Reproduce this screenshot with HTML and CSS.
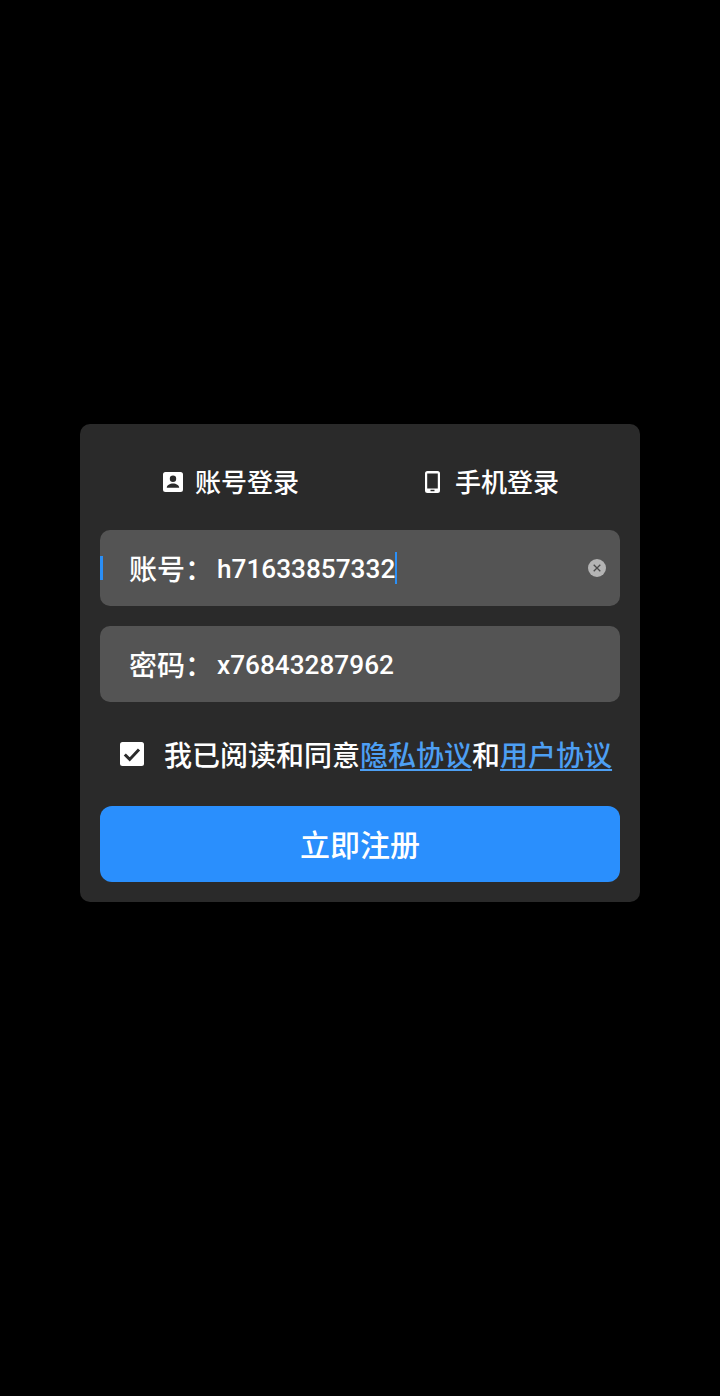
FILE: index.html
```html
<!DOCTYPE html>
<html lang="zh-CN">
<head>
<meta charset="utf-8">
<title>注册</title>
<link rel="stylesheet" href="styles.css">
</head>
<body>
<main class="card">
  <div class="tabs">
    <div class="tab">
      <span class="icon-box"><svg class="tab-icon" viewBox="0 0 20 20"><path fill="#fff" fill-rule="evenodd" d="M2.5 0h15A2.5 2.5 0 0 1 20 2.5v15a2.5 2.5 0 0 1-2.5 2.5h-15A2.5 2.5 0 0 1 0 17.500v-15A2.500 2.500 0 0 1 2.500 0ZM10 3.500a3.200 3.200 0 1 0 0 6.400 3.200 3.200 0 0 0 0-6.400ZM3.800 15.800h12.400c0-2.600-3.100-4.200-6.200-4.200s-6.200 1.600-6.200 4.200Z"/></svg></span>
      <span class="tab-text">账号登录</span>
    </div>
    <div class="tab">
      <span class="icon-box"><svg class="tab-icon phone" viewBox="0 0 15 22"><path fill="#fff" fill-rule="evenodd" d="M2.500 0h10A2.500 2.500 0 0 1 15 2.500v17a2.500 2.500 0 0 1-2.500 2.500h-10A2.500 2.500 0 0 1 0 19.500v-17A2.500 2.500 0 0 1 2.500 0ZM2.200 2.500v15h10.600v-15ZM5.500 18.800v1.400h4v-1.400Z"/></svg></span>
      <span class="tab-text">手机登录</span>
    </div>
  </div>
  <div class="field">
    <span class="caret-left"></span>
    <span class="label">账号：</span>
    <span class="value value-caret">h71633857332</span>
    <svg class="clear" viewBox="0 0 18 18"><circle cx="9" cy="9" r="9" fill="#b4b4b4"/><path d="M5.700 5.700l6.600 6.600M12.300 5.700l-6.600 6.600" stroke="#4a4a4a" stroke-width="1.300" fill="none"/></svg>
  </div>
  <div class="field">
    <span class="label">密码：</span>
    <span class="value">x76843287962</span>
  </div>
  <div class="agree">
    <svg class="check" viewBox="0 0 24 24"><rect width="24" height="24" rx="2.500" fill="#fff"/><path d="M4.800 12.500l4.900 4.900 9.300-10" stroke="#2a2a2a" stroke-width="3" fill="none"/></svg>
    <p class="agree-text">我已阅读和同意<a class="link">隐私协议</a>和<a class="link">用户协议</a></p>
  </div>
  <button class="submit"><span class="submit-text">立即注册</span></button>
</main>
</body>
</html>
```
FILE: styles.css
```css
* { box-sizing: border-box; }
html, body { margin: 0; height: 100%; }
body {
  background: #000;
  color: #fff;
  font-family: "Noto Sans CJK SC", "Noto Sans", sans-serif;
  font-weight: 500;
  display: flex;
  flex-direction: column;
  align-items: center;
  padding-top: 424px;
}
.card {
  width: 560px;
  height: 478px;
  padding: 0 20px 20px;
  background: #2a2a2a;
  border-radius: 10px;
}
.tabs {
  display: grid;
  grid-template-columns: 260px 260px;
  height: 106px;
  padding-top: 12px;
}
.tab {
  display: flex;
  align-items: center;
  justify-content: center;
  gap: 10px;
  font-size: 26px;
  line-height: 36px;
}
.tab-text { display: block; margin-top: -4px; }
.icon-box { display: flex; justify-content: center; width: 24px; margin-top: -2px; }
.tab-icon { width: 20px; height: 20px; }
.tab-icon.phone { width: 15px; height: 22px; }
.field {
  position: relative;
  display: flex;
  align-items: center;
  height: 76px;
  margin-bottom: 20px;
  padding-left: 29px;
  background: #545454;
  border-radius: 10px;
  font-size: 28px;
}
.label { width: 88px; flex: none; }
.value {
  font-family: "Roboto", "Noto Sans CJK SC", sans-serif;
  font-size: 26.2px;
  line-height: 30px;
  padding-top: 2px;
}
.value-caret { border-right: 2px solid #2a8ff7; }
.caret-left {
  position: absolute;
  left: 0;
  top: 26px;
  width: 3px;
  height: 24px;
  background: #2a8ff7;
}
.clear {
  position: absolute;
  right: 14px;
  top: 29px;
  width: 18px;
  height: 18px;
}
.agree {
  display: flex;
  align-items: center;
  height: 64px;
  margin-bottom: 20px;
  padding-left: 20px;
}
.check { width: 24px; height: 24px; flex: none; margin-right: 20px; }
.agree-text { margin: 0; font-size: 28px; line-height: 40px; white-space: nowrap; }
.link { color: #4d9ff3; text-decoration: underline; text-underline-offset: 3px; }
.submit {
  display: block;
  width: 100%;
  height: 76px;
  border: 0;
  border-radius: 12px;
  background: #2a8ffd;
  color: #fff;
  font: inherit;
  font-size: 30px;
}
.submit-text { display: block; margin-top: -3px; }
```
